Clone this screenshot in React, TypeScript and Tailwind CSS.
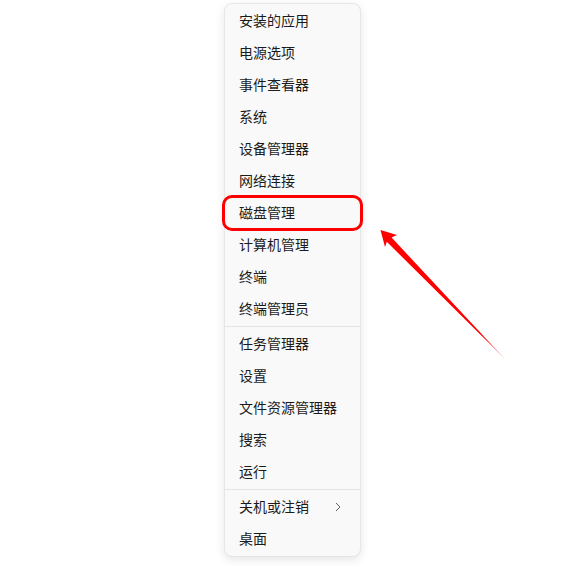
const groups: string[][] = [
  [
    "安装的应用",
    "电源选项",
    "事件查看器",
    "系统",
    "设备管理器",
    "网络连接",
    "磁盘管理",
    "计算机管理",
    "终端",
    "终端管理员",
  ],
  ["任务管理器", "设置", "文件资源管理器", "搜索", "运行"],
  ["关机或注销", "桌面"],
];

function MenuRow({ label, submenu }: { label: string; submenu?: boolean }) {
  return (
    <div className="flex h-8 items-center justify-between pb-[2px] pl-[14px] pr-[19px] text-[14px] text-[#1b1b1b]">
      <span>{label}</span>
      {submenu && (
        <svg width="6" height="10" viewBox="0 0 6 10" className="mt-[2px] text-[#5f5f5f]">
          <path d="M1 1l4 4-4 4" fill="none" stroke="currentColor" strokeWidth="1" />
        </svg>
      )}
    </div>
  );
}

function Arrow() {
  return (
    <svg
      className="pointer-events-none absolute left-0 top-0"
      width="574"
      height="566"
      viewBox="0 0 574 566"
    >
      <defs>
        <linearGradient id="fade" x1="380" y1="230" x2="506" y2="360" gradientUnits="userSpaceOnUse">
          <stop offset="0" stopColor="#ff0000" />
          <stop offset="0.8" stopColor="#ff0000" />
          <stop offset="1" stopColor="#ff0000" stopOpacity="0.3" />
        </linearGradient>
      </defs>
      <polygon
        points="380.5,230 397,235 391.6,237.6 506,360 386.8,241.8 385,247"
        fill="url(#fade)"
      />
    </svg>
  );
}

export default function App() {
  return (
    <div
      className="relative h-[566px] w-[574px] overflow-hidden bg-white"
      style={{ fontFamily: '"Noto Sans CJK SC", "Noto Sans", sans-serif' }}
    >
      <div className="ml-[224px] mt-[3px] w-[137px] rounded-lg border border-[#e6e6e6] bg-[#f9f9f9] py-px shadow-[0_3px_10px_rgba(0,0,0,0.10)]">
        {groups.map((items, gi) => (
          <div key={gi}>
            {gi > 0 && <div className="my-px h-px bg-[#e5e5e5]" />}
            {items.map((label) => (
              <MenuRow key={label} label={label} submenu={label === "关机或注销"} />
            ))}
          </div>
        ))}
      </div>

      {/* 磁盘管理 highlight */}
      <div className="pointer-events-none absolute left-[222px] top-[195px] h-[36px] w-[141px] rounded-[10px] border-[3px] border-[#ff0000]" />

      <Arrow />
    </div>
  );
}
